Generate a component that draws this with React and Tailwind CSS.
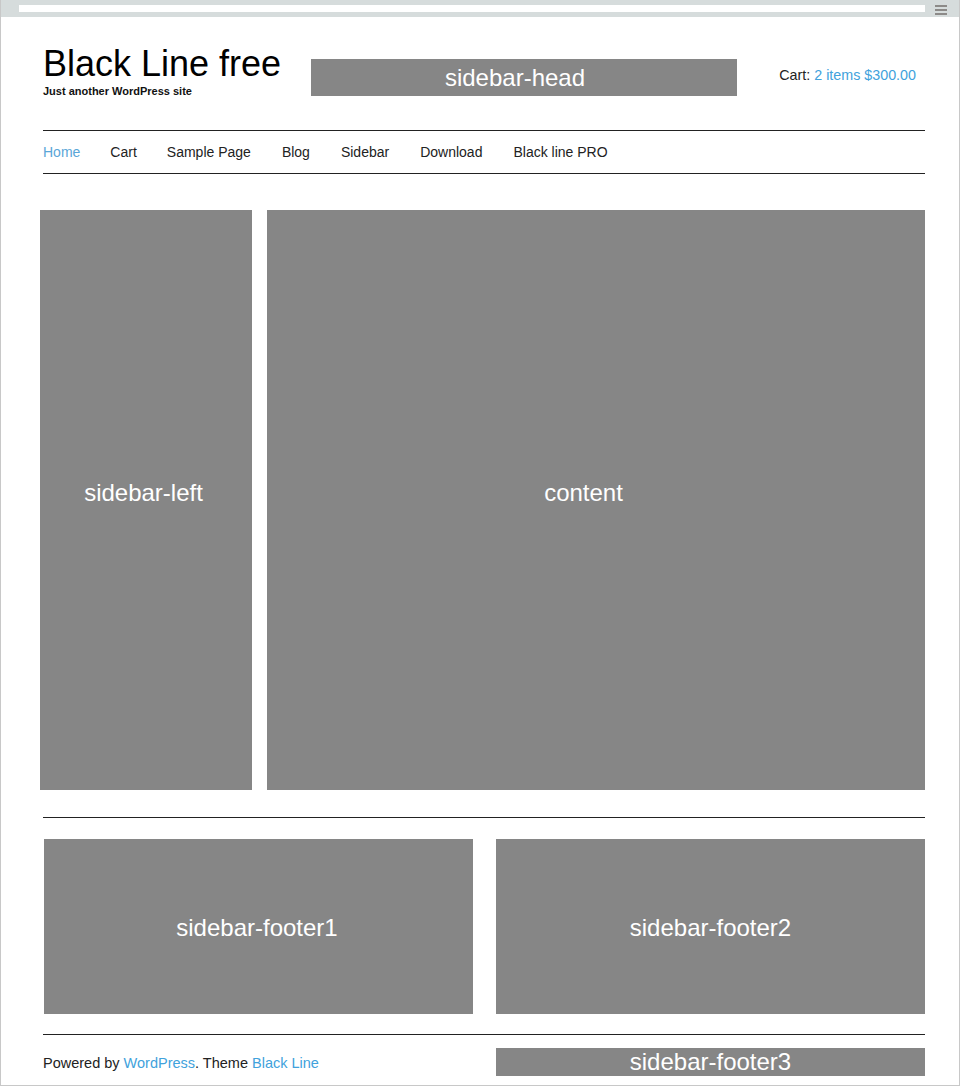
const navItems = ["Home", "Cart", "Sample Page", "Blog", "Sidebar", "Download", "Black line PRO"];

function Block({ label, className }) {
    return (
        <div className={`flex items-center justify-center bg-[#868686] text-white text-[24px] ${className}`}>
            {label}
        </div>
    );
}

export default function App() {
    return (
        <div
            className="w-[960px] h-[1086px] bg-white border-x border-b border-[#c8c8c8] overflow-hidden"
            style={{ fontFamily: '"Liberation Sans", Arial, sans-serif' }}
        >
            {/* browser bar */}
            <div className="h-[17px] bg-[#d6dcdc] flex items-start pt-[5px] pl-[18px] pr-[12px]">
                <div className="h-[7px] w-[906px] bg-white" />
                <div className="ml-auto flex flex-col gap-[2px] w-[12px]">
                    <span className="h-[2px] bg-[#8c8a88]" />
                    <span className="h-[2px] bg-[#8c8a88]" />
                    <span className="h-[2px] bg-[#8c8a88]" />
                </div>
            </div>

            <div className="pl-[42px] pr-[34px]">
                {/* header */}
                <header className="flex items-start pt-[29px]">
                    <div className="w-[268px]">
                        <h1 className="text-[36px] leading-none text-black">Black Line free</h1>
                        <p className="mt-[4px] text-[11px] leading-[11px] font-bold text-[#111]">Just another WordPress site</p>
                    </div>
                    <Block label="sidebar-head" className="mt-[13px] w-[426px] h-[37px] leading-none pr-[18px] pt-[1px]" />
                    <div className="ml-auto mr-[9px] mt-[21px] text-[14.3px] leading-[16px] text-[#222]">
                        Cart: <a className="text-[#41a2dc]">2 items $300.00</a>
                    </div>
                </header>

                {/* nav */}
                <nav className="mt-[33px] h-[44px] border-y border-[#222] flex items-center gap-[30px] text-[14px] leading-[16px] text-[#222]">
                    {navItems.map((item, i) => (
                        <a key={item} className={i === 0 ? "text-[#5aa6d8]" : i >= 3 ? "ml-[1px]" : ""}>{item}</a>
                    ))}
                </nav>

                {/* main */}
                <main className="mt-[36px] flex gap-[15px] -ml-[3px]">
                    <Block label="sidebar-left" className="w-[212px] h-[580px] pr-[5px] pb-[14px]" />
                    <Block label="content" className="w-[658px] h-[580px] pr-[25px] pb-[14px]" />
                </main>

                {/* footer widgets */}
                <div className="mt-[27px] border-t border-[#222] pt-[21px] pl-[1px] flex gap-[23px]">
                    <Block label="sidebar-footer1" className="w-[429px] h-[175px] pr-[3px] pt-[2px]" />
                    <Block label="sidebar-footer2" className="w-[429px] h-[175px] pt-[2px]" />
                </div>

                <footer className="mt-[20px] border-t border-[#222] pt-[13px] flex items-center">
                    <p className="flex-1 pt-[2px] text-[14.5px] leading-[16px] text-[#222]">
                        Powered by <a className="text-[#41a2dc]">WordPress</a>. Theme <a className="text-[#41a2dc]">Black Line</a>
                    </p>
                    <Block label="sidebar-footer3" className="w-[429px] h-[28px] leading-[28px]" />
                </footer>
            </div>
        </div>
    );
}
